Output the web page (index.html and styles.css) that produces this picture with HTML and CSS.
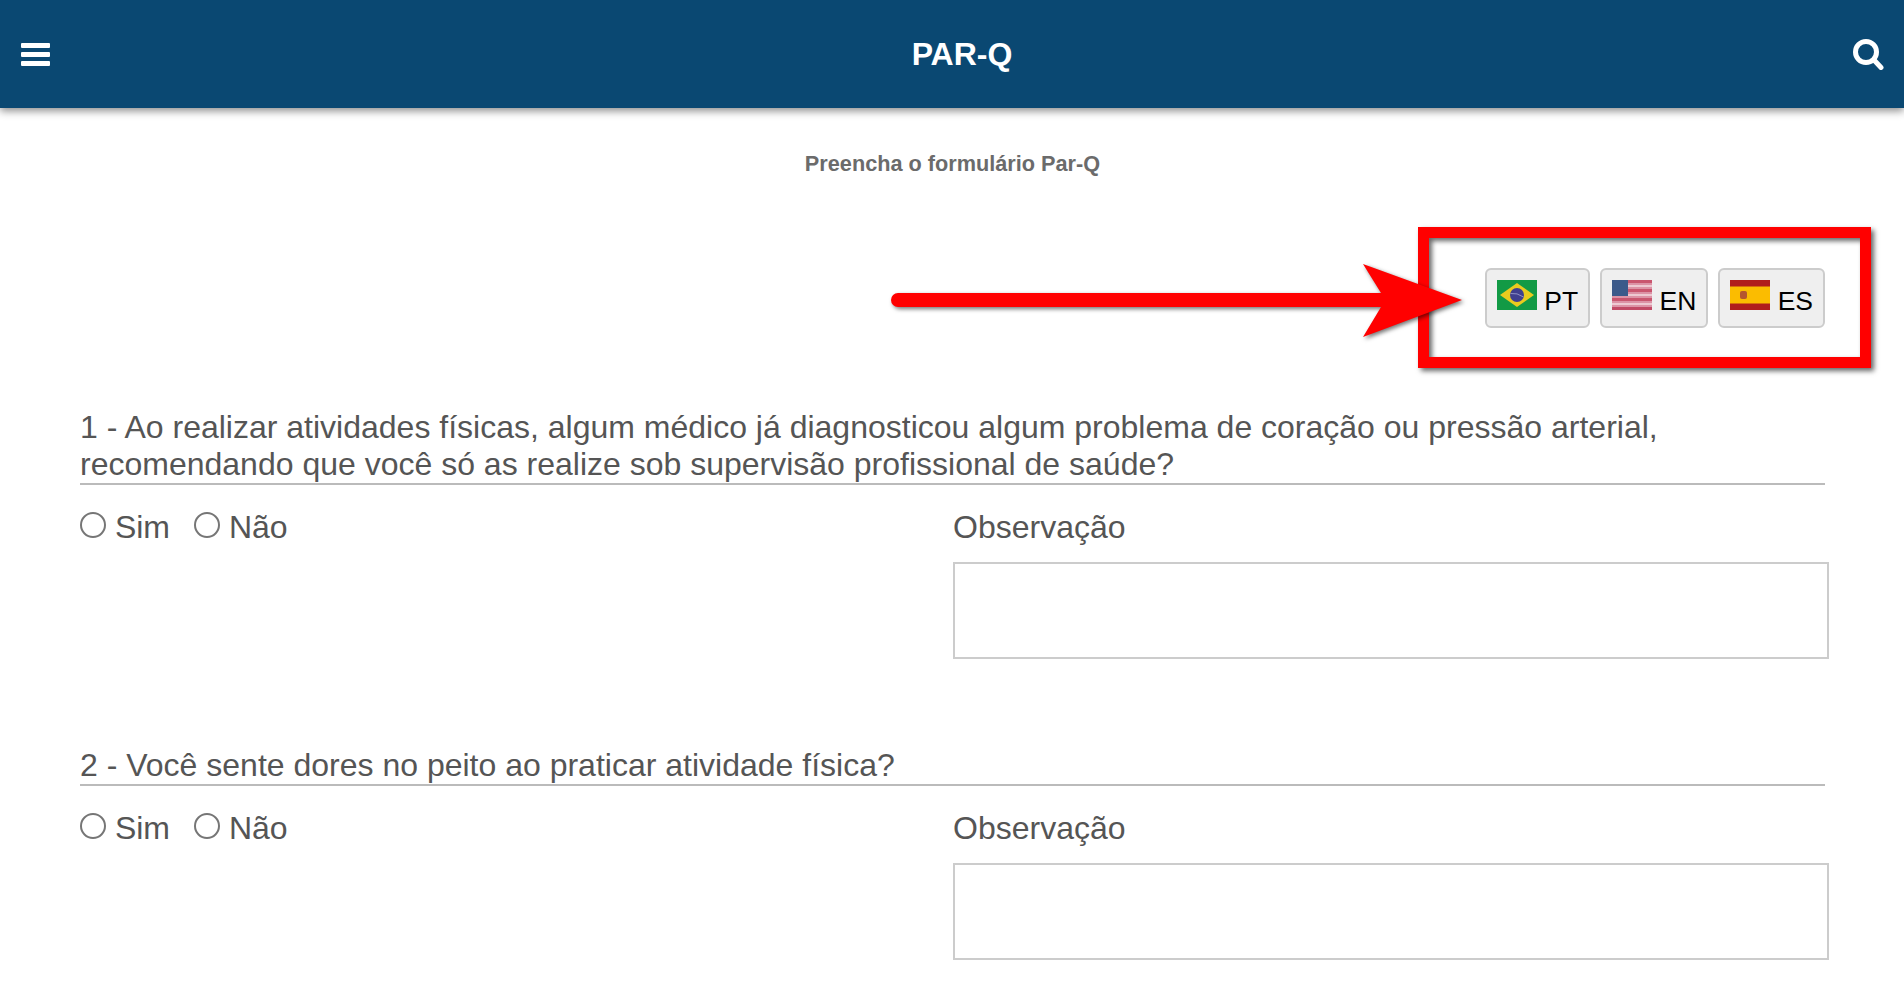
FILE: index.html
```html
<!DOCTYPE html>
<html lang="pt">
<head>
  <meta charset="UTF-8">
  <meta name="viewport" content="width=device-width, initial-scale=1">
  <title>PAR-Q</title>
  <link rel="stylesheet" href="styles.css">
</head>
<body>

<header class="topbar">
  <svg class="icon-menu" width="29" height="23" viewBox="0 0 29 23">
    <rect x="0" y="0" width="29" height="5" rx="1" fill="#fff"/>
    <rect x="0" y="9" width="29" height="5" rx="1" fill="#fff"/>
    <rect x="0" y="18" width="29" height="5" rx="1" fill="#fff"/>
  </svg>
  <h1 class="topbar-title">PAR-Q</h1>
  <svg class="icon-search" width="32" height="32" viewBox="0 0 32 32">
    <circle cx="14" cy="14" r="10.5" fill="none" stroke="#fff" stroke-width="5"/>
    <line x1="22" y1="22" x2="29" y2="29.5" stroke="#fff" stroke-width="5" stroke-linecap="round"/>
  </svg>
</header>

<main class="page">
  <p class="subtitle">Preencha o formulário Par-Q</p>

  <!-- Idiomas + marcação em vermelho -->
  <div class="lang-row">
    <button class="lang-btn">
      <svg class="flag" width="40" height="30" viewBox="0 0 40 30">
        <rect width="40" height="30" fill="#129a45"/>
        <g class="flag-art">
          <polygon points="20,3 37,15 20,27 3,15" fill="#e9cb1f"/>
          <circle cx="20" cy="15" r="7" fill="#3f3f8f"/>
          <path d="M13.5 13.5 Q20 12.5 26.5 17" fill="none" stroke="#8f90c4" stroke-width="1"/>
        </g>
      </svg> PT
    </button>
    <button class="lang-btn">
      <svg class="flag" width="40" height="30" viewBox="0 0 40 30">
        <rect width="40" height="30" fill="#dc93a6"/>
        <g class="flag-art">
          <rect y="0" width="40" height="3" fill="#c9566f"/>
          <rect y="5" width="40" height="2" fill="#eec9d2"/>
          <rect y="9" width="40" height="3" fill="#c9566f"/>
          <rect y="14" width="40" height="2" fill="#eec9d2"/>
          <rect y="18" width="40" height="3" fill="#c9566f"/>
          <rect y="23" width="40" height="2" fill="#eec9d2"/>
          <rect y="27" width="40" height="3" fill="#c24a66"/>
          <rect width="16" height="16" fill="#3c5a8a"/>
        </g>
      </svg> EN
    </button>
    <button class="lang-btn">
      <svg class="flag" width="40" height="30" viewBox="0 0 40 30">
        <rect width="40" height="30" fill="#b01c1c"/>
        <g class="flag-art">
          <rect x="-2" y="6.5" width="44" height="17" fill="#fbbc00"/>
          <rect x="10" y="11" width="7" height="8" rx="2" fill="#b5562e"/>
        </g>
      </svg> ES
    </button>

    <div class="mark-box"></div>
    <svg class="mark-arrow" width="590" height="90" viewBox="0 0 590 90">
      <path d="M18 37 H501 L483 8 L582 44 L483 81 L501 51 H18 A7 7 0 0 1 18 37 Z" fill="#f00"/>
    </svg>
  </div>

  <section class="question">
    <h2 class="question-title">1 - Ao realizar atividades físicas, algum médico já diagnosticou algum problema de coração ou pressão arterial, recomendando que você só as realize sob supervisão profissional de saúde?</h2>
    <div class="answer">
      <div class="options">
        <label class="option"><input type="radio" name="q1"> Sim</label>
        <label class="option"><input type="radio" name="q1"> Não</label>
      </div>
      <div class="note">
        <label class="note-label">Observação</label>
        <textarea class="note-input"></textarea>
      </div>
    </div>
  </section>

  <section class="question">
    <h2 class="question-title">2 - Você sente dores no peito ao praticar atividade física?</h2>
    <div class="answer">
      <div class="options">
        <label class="option"><input type="radio" name="q2"> Sim</label>
        <label class="option"><input type="radio" name="q2"> Não</label>
      </div>
      <div class="note">
        <label class="note-label">Observação</label>
        <textarea class="note-input"></textarea>
      </div>
    </div>
  </section>
</main>

</body>
</html>
```

FILE: styles.css
```css
body {
  margin: 0;
  font-family: "Liberation Sans", Arial, sans-serif;
  background: #fff;
  color: #555;
}

.topbar {
  display: flex;
  align-items: center;
  height: 108px;
  padding: 0 20px 0 21px;
  background: #0a4872;
  box-shadow: 0 3px 8px rgba(0, 0, 0, 0.45);
}

.topbar-title {
  flex: 1;
  margin: 0;
  padding-left: 22px;
  text-align: center;
  color: #fff;
  font-size: 32px;
  font-weight: bold;
}

.page {
  padding: 0 79px 0 80px;
}

.subtitle {
  margin: 41px 0 0;
  line-height: 30px;
  text-align: center;
  color: #6b6b6b;
  font-size: 21.7px;
  font-weight: bold;
}

/* Botoes de idioma */
.lang-row {
  position: relative;
  display: flex;
  justify-content: flex-end;
  gap: 10px;
  margin-top: 89px;
}

.lang-btn {
  height: 60px;
  padding: 0 10px;
  background: #efefef;
  border: 2px solid #ccc;
  border-radius: 6px;
  color: #000;
  font-family: inherit;
  font-size: 26.5px;
}

.flag {
  vertical-align: baseline;
}

.flag-art {
  filter: blur(0.5px);
}

.mark-box {
  position: absolute;
  top: -41px;
  right: -46px;
  width: 453px;
  height: 141px;
  box-sizing: border-box;
  border: 11px solid #f00;
  box-shadow: 3px 3px 5px rgba(0, 0, 0, 0.6), inset 3px 3px 5px rgba(0, 0, 0, 0.6);
}

.mark-arrow {
  position: absolute;
  top: -12px;
  left: 800px;
  filter: drop-shadow(2px 2px 2px rgba(0, 0, 0, 0.55));
}

/* Perguntas */
.question {
  margin-top: 88px;
}

.lang-row + .question {
  margin-top: 81px;
}

.question-title {
  margin: 0;
  border-bottom: 2px solid #bbb;
  font-size: 32px;
  font-weight: normal;
  line-height: 37px;
}

.answer {
  display: grid;
  grid-template-columns: 873px 876px;
  margin-top: 23px;
}

.options {
  display: flex;
  gap: 24px;
  align-items: flex-start;
}

.option,
.note-label {
  display: block;
  font-size: 32px;
  line-height: 38px;
}

.option input {
  appearance: none;
  box-sizing: border-box;
  width: 26px;
  height: 26px;
  margin: 0;
  border: 2px solid #767676;
  border-radius: 50%;
  background: #fff;
  vertical-align: 0;
}

.note-input {
  display: block;
  box-sizing: border-box;
  width: 876px;
  height: 97px;
  margin-top: 16px;
  border: 2px solid #ccc;
  background: #fff;
  resize: none;
}
```
